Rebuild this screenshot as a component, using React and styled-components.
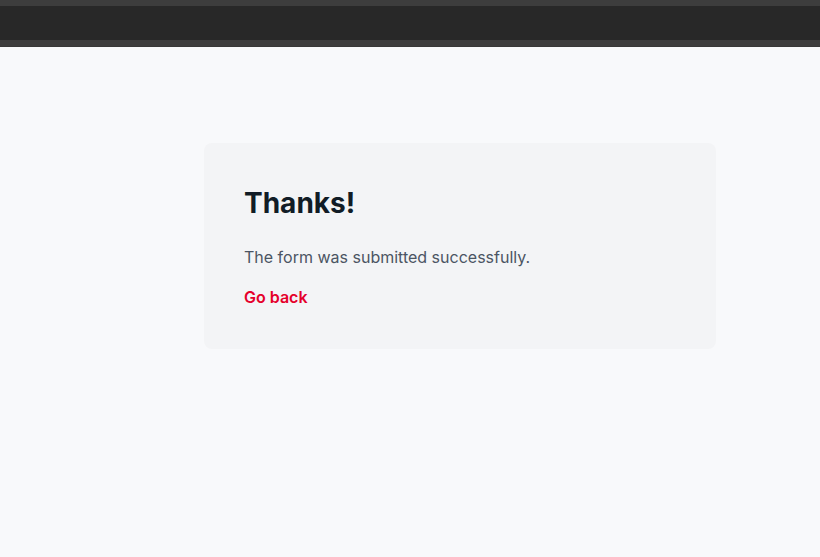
import React from 'react';
import styled, { createGlobalStyle } from 'styled-components';

const GlobalStyle = createGlobalStyle`
	html, body {
		margin: 0;
		padding: 0;
		background-color: #f8f9fb;
		font-family: Inter, 'Noto Sans', sans-serif;
	}
`;

const App = () => {
	return (
		<>
			<GlobalStyle />
			<TopBar>
				<BarInner />
			</TopBar>
			<Page>
				<Card>
					<Title>Thanks!</Title>
					<Message>The form was submitted successfully.</Message>
					<BackLink href="#">Go back</BackLink>
				</Card>
			</Page>
		</>
	);
};

const TopBar = styled.div`
	height: 47px;
	padding: 6px 0;
	box-sizing: border-box;
	background-color: #3d3d3d;
	border-bottom: 1px solid #383838;
`;

const BarInner = styled.div`
	height: 34px;
	background-color: #282828;
`;

const Page = styled.main`
	min-height: 510px;
	padding: 96px 0 0 204px;
	box-sizing: border-box;
`;

const Card = styled.section`
	width: 512px;
	box-sizing: border-box;
	padding: 40px;
	background-color: #f3f4f6;
	border-radius: 8px;
`;

const Title = styled.h1`
	margin: 0;
	font-size: 28px;
	line-height: 40px;
	font-weight: 700;
	color: #111c26;
`;

const Message = styled.p`
	margin: 22px 0 0;
	font-size: 16px;
	line-height: 24px;
	color: #4b5563;
`;

const BackLink = styled.a`
	display: block;
	margin-top: 16px;
	font-size: 16px;
	line-height: 24px;
	font-weight: 600;
	color: #e5002b;
	text-decoration: none;
`;

export default App;
